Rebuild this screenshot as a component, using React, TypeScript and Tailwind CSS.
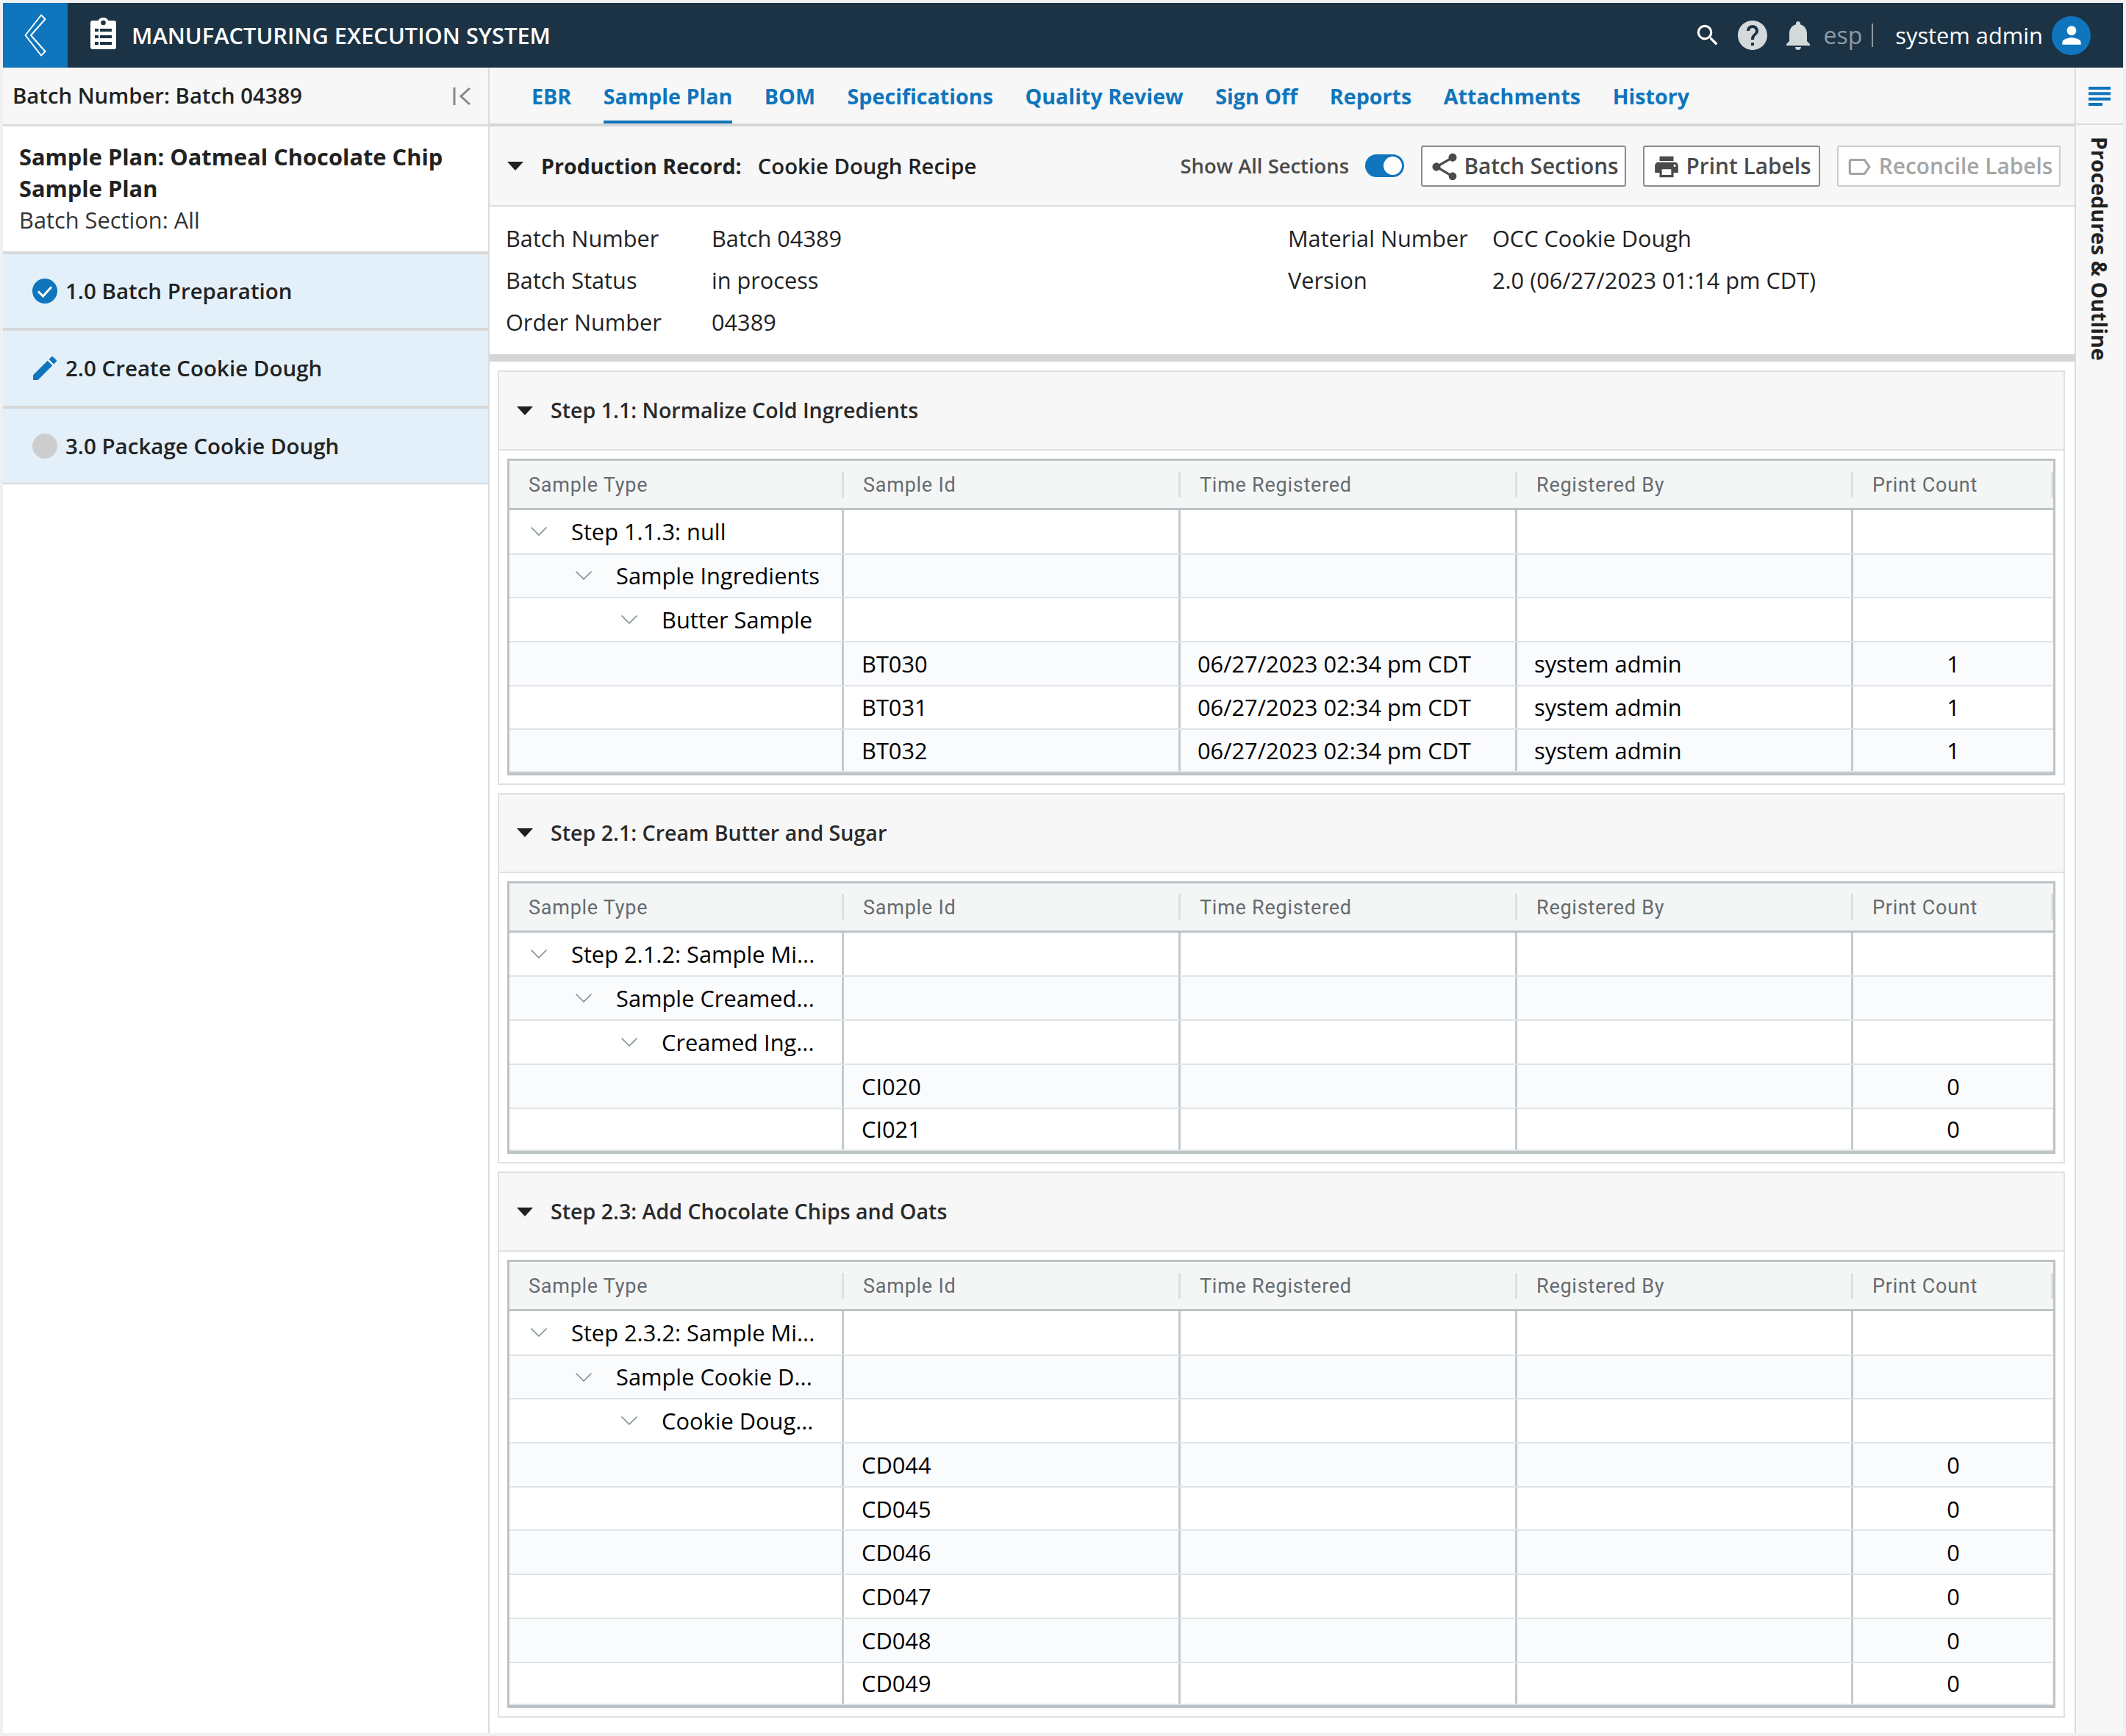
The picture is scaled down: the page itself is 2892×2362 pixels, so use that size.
import React from 'react';
import { ChevronDown } from 'lucide-react';
import { MdSearch, MdHelp, MdNotifications, MdEdit, MdShare, MdPrint, MdLabelOutline, MdPerson } from 'react-icons/md';

const tabs = ['EBR', 'Sample Plan', 'BOM', 'Specifications', 'Quality Review', 'Sign Off', 'Reports', 'Attachments', 'History'];
const columns = ['Sample Type', 'Sample Id', 'Time Registered', 'Registered By', 'Print Count'];

interface Sample {
  id: string;
  time?: string;
  by?: string;
  count: number;
}

interface Step {
  title: string;
  tree: string[];
  samples: Sample[];
}

const registered = { time: '06/27/2023 02:34 pm CDT', by: 'system admin' };

const steps: Step[] = [
  {
    title: 'Step 1.1: Normalize Cold Ingredients',
    tree: ['Step 1.1.3: null', 'Sample Ingredients', 'Butter Sample'],
    samples: [
      { id: 'BT030', count: 1, ...registered },
      { id: 'BT031', count: 1, ...registered },
      { id: 'BT032', count: 1, ...registered },
    ],
  },
  {
    title: 'Step 2.1: Cream Butter and Sugar',
    tree: ['Step 2.1.2: Sample Mi...', 'Sample Creamed...', 'Creamed Ing...'],
    samples: [
      { id: 'CI020', count: 0 },
      { id: 'CI021', count: 0 },
    ],
  },
  {
    title: 'Step 2.3: Add Chocolate Chips and Oats',
    tree: ['Step 2.3.2: Sample Mi...', 'Sample Cookie D...', 'Cookie Doug...'],
    samples: [
      { id: 'CD044', count: 0 },
      { id: 'CD045', count: 0 },
      { id: 'CD046', count: 0 },
      { id: 'CD047', count: 0 },
      { id: 'CD048', count: 0 },
      { id: 'CD049', count: 0 },
    ],
  },
];

const indents = ['pl-[20px]', 'pl-[81px]', 'pl-[143px]'];

const Caret = () => (
  <svg width="22" height="12" viewBox="0 0 22 12" className="shrink-0" fill="#1f1f1f">
    <path d="M0 0h22L11 12z" />
  </svg>
);

const Cell = ({ className = '', children }: { className?: string; children?: React.ReactNode }) => (
  <div className={`flex items-center border-r-[3px] border-[#c5cacd] ${className}`}>{children}</div>
);

const StepSection = ({ step }: { step: Step }) => {
  const rowBg = (i: number) => (i % 2 === 0 ? 'bg-white' : 'bg-[#fafbfd]');

  return (
    <section className="border-2 border-[#dfe0e1]">
      <div className="flex h-[107px] items-center gap-[24px] border-b-2 border-[#dfe0e1] bg-[#f7f7f7] pl-[24px] text-[28.6px] font-semibold text-[#2a2a2a]">
        <Caret />
        <span>{step.title}</span>
      </div>
      <div className="bg-white px-[11px] pt-[11px] pb-[11px]">
        <div className="border-x-[3px] border-t-[3px] border-b-[4px] border-[#bcc3c7]">
          <div className="grid h-[67px] grid-cols-[455px_458px_458px_457px_1fr] border-b-[3px] border-[#bcc3c7] bg-[#f4f6f6] font-['Roboto',sans-serif] text-[27px] tracking-[0.75px] text-[#666c6f]">
            {columns.map((c) => (
              <div key={c} className="flex items-center justify-between pl-[26px]">
                <span className="pt-[3px]">{c}</span>
                <span className="h-[35px] w-[3px] bg-[#dcdfe3]" />
              </div>
            ))}
          </div>
          {step.tree.map((label, i) => (
            <div key={label} className={`grid grid-cols-[455px_458px_458px_457px_1fr] border-b-2 border-[#dfe3e6] ${i === 0 ? 'h-[60.5px]' : 'h-[59.7px]'} ${rowBg(i)}`}>
              <Cell className={indents[i]}>
                <ChevronDown className="h-[40px] w-[40px] shrink-0 text-[#7f8c90]" strokeWidth={1} />
                <span className="ml-[24px] text-[30.8px] text-black">{label}</span>
              </Cell>
              <Cell />
              <Cell />
              <Cell />
              <div />
            </div>
          ))}
          {step.samples.map((s, i) => (
            <div key={s.id} className={`grid grid-cols-[455px_458px_458px_457px_1fr] border-b-2 border-[#dfe3e6] text-[30.8px] text-black ${i === step.samples.length - 1 ? 'h-[57.7px]' : 'h-[59.7px]'} ${rowBg(i + 3)}`}>
              <Cell />
              <Cell className="pl-[24px]">{s.id}</Cell>
              <Cell className="pl-[23px]">{s.time}</Cell>
              <Cell className="pl-[23px]">{s.by}</Cell>
              <div className="flex items-center justify-center">{s.count}</div>
            </div>
          ))}
        </div>
      </div>
    </section>
  );
};

const App: React.FC = () => {
  return (
    <div className="flex h-[2362px] w-[2892px] flex-col bg-[#eef0f1] p-1 font-['Open_Sans','Liberation_Sans',sans-serif] text-[#222]">
      <header className="flex h-[88px] shrink-0 items-center bg-[#1b3344] text-white">
        <div className="flex h-full w-[88px] items-center justify-center bg-[#0f75bc]">
          <svg width="30" height="58" viewBox="0 0 30 58" fill="none" stroke="white" strokeWidth="2">
            <path d="M23 1.5 L28.5 7 L9 29 L28.5 51 L23 56.5 L1.5 29 Z" strokeLinejoin="round" />
          </svg>
        </div>
        <svg className="mb-[5px] ml-[31px]" width="35" height="43" viewBox="0 0 35 43">
          <path fill="white" fillRule="evenodd" d="M17.5 0a7 7 0 0 1 6.8 4H32a3 3 0 0 1 3 3v33a3 3 0 0 1-3 3H3a3 3 0 0 1-3-3V7a3 3 0 0 1 3-3h7.7A7 7 0 0 1 17.5 0zm0 3.7a3.3 3.3 0 1 0 0 6.6 3.3 3.3 0 0 0 0-6.6z" />
          <g fill="#1b3344">
            <rect x="6" y="15" width="5" height="4" />
            <rect x="13" y="15" width="16" height="4" />
            <rect x="6" y="24" width="5" height="4" />
            <rect x="13" y="24" width="16" height="4" />
            <rect x="6" y="33" width="5" height="4" />
            <rect x="13" y="33" width="16" height="4" />
          </g>
        </svg>
        <span className="ml-[21px] text-[30.8px] font-semibold">MANUFACTURING EXECUTION SYSTEM</span>
        <div className="ml-auto flex items-center pr-[44px]">
          <MdSearch className="h-[38px] w-[38px] text-white" />
          <MdHelp className="ml-[18px] h-[48px] w-[48px] text-[#d4d9dc]" />
          <MdNotifications className="ml-[14px] h-[48px] w-[48px] text-[#d4d9dc]" />
          <span className="ml-[11px] text-[32px] text-[#8d9aa3]">esp</span>
          <span className="ml-[13px] h-[32px] w-[2px] bg-[#8d9aa3]" />
          <span className="ml-[30px] text-[30.8px] text-white">system admin</span>
          <span className="ml-[12px] flex h-[53px] w-[53px] items-center justify-center rounded-full bg-[#0f75bc]">
            <MdPerson className="h-[38px] w-[38px] text-white" />
          </span>
        </div>
      </header>

      <div className="flex min-h-0 flex-1">
        <aside className="flex w-[662px] shrink-0 flex-col border-r-2 border-[#dcdcdc] bg-white">
          <div className="flex h-[80px] items-center justify-between border-b-[3px] border-[#dcdcdc] bg-[#f7f7f7] pl-[13px] pr-[22px] text-[29.3px] font-[550]">
            <span className="pt-[1px]">Batch Number: Batch 04389</span>
            <svg width="26" height="26" viewBox="0 0 26 26" fill="none" stroke="#888" strokeWidth="3">
              <path d="M2 1v24M23 2 L11 13 L23 24" />
            </svg>
          </div>
          <div className="h-[170px] px-[22px] pt-[20px] text-[30.8px] leading-[43px]">
            <div className="font-bold text-[#222]">Sample Plan: Oatmeal Chocolate Chip<br />Sample Plan</div>
            <div className="text-[#333]">Batch Section: All</div>
          </div>
          <div className="flex h-[108px] items-center gap-[11px] border-y-[4px] border-[#d8d8d8] bg-[#e3f0f9] pl-[40px] text-[29.5px] font-[550]">
            <svg width="34" height="34" viewBox="0 0 34 34">
              <circle cx="17" cy="17" r="17" fill="#0f75bc" />
              <path d="M8 17.5l6.5 6.5L26 11.5" fill="none" stroke="white" strokeWidth="3" />
            </svg>
            <span>1.0 Batch Preparation</span>
          </div>
          <div className="flex h-[106px] items-center gap-[11px] border-b-[4px] border-[#d8d8d8] bg-[#e3f0f9] pl-[40px] text-[29.5px] font-[550]">
            <MdEdit className="h-[34px] w-[34px] scale-125 text-[#0f75bc]" />
            <span>2.0 Create Cookie Dough</span>
          </div>
          <div className="flex h-[103px] items-center gap-[11px] border-b-2 border-[#d8d8d8] bg-[#e3f0f9] pl-[40px] text-[29.5px] font-[550]">
            <span className="h-[34px] w-[34px] rounded-full bg-[#cdcdcd]" />
            <span className="pt-[1px]">3.0 Package Cookie Dough</span>
          </div>
        </aside>

        <main className="flex min-w-0 flex-1 flex-col bg-white">
          <nav className="flex h-[80px] shrink-0 items-stretch gap-[43.5px] border-b-[4px] border-[#d6d5d6] bg-[#f7f7f7] pl-[57px] text-[28.7px] font-bold text-[#0f75bc]">
            {tabs.map((t) => (
              <a key={t} className={`flex items-center pt-[5px] ${t === 'Sample Plan' ? 'border-b-[4px] border-[#0f75bc]' : 'pb-[4px]'}`}>{t}</a>
            ))}
          </nav>

          <div className="flex h-[109px] shrink-0 items-center border-b-2 border-[#dcdcdc] bg-[#f7f7f7] pl-[24px] pr-[19px]">
            <Caret />
            <span className="ml-[24px] pt-[2px] text-[28.6px] font-bold">Production Record:</span>
            <span className="ml-[22px] pt-[2px] text-[29.3px] font-[550]">Cookie Dough Recipe</span>
            <span className="ml-auto text-[27.4px] font-[550] text-[#4a4a4a]">Show All Sections</span>
            <span className="ml-[22px] flex h-[31px] w-[53px] items-center justify-end rounded-full bg-[#0f75bc] pr-[3px]">
              <span className="h-[25px] w-[25px] rounded-full bg-white" />
            </span>
            <button className="ml-[23px] flex h-[56px] w-[279px] items-center justify-center gap-[4px] rounded-[3px] border-2 border-[#8c8c8c] bg-white pt-[2px] text-[29.8px] font-[550] text-[#4a4a4a]">
              <MdShare className="h-[44px] w-[44px]" />
              Batch Sections
            </button>
            <button className="ml-[23px] flex h-[56px] w-[241px] items-center justify-center gap-[8px] rounded-[3px] border-2 border-[#8c8c8c] bg-white pt-[2px] text-[29.8px] font-[550] text-[#4a4a4a]">
              <MdPrint className="h-[38px] w-[38px]" />
              Print Labels
            </button>
            <button className="ml-[23px] flex h-[56px] w-[304px] items-center justify-center gap-[8px] rounded-[3px] border-2 border-[#cccccc] bg-white pt-[2px] text-[29.8px] font-[550] text-[#a5a5a5]">
              <MdLabelOutline className="h-[38px] w-[38px]" />
              Reconcile Labels
            </button>
          </div>

          <div className="grid h-[211px] shrink-0 grid-cols-[280px_784px_278px_1fr] content-start border-b-[10px] border-[#d6d5d6] pl-[22px] pt-[15px] text-[30.7px] leading-[57px] text-[#222]">
            <span>Batch Number</span>
            <span>Batch 04389</span>
            <span>Material Number</span>
            <span>OCC Cookie Dough</span>
            <span>Batch Status</span>
            <span>in process</span>
            <span>Version</span>
            <span>2.0 (06/27/2023 01:14 pm CDT)</span>
            <span>Order Number</span>
            <span>04389</span>
          </div>

          <div className="flex flex-col gap-[11px] pl-[11px] pr-[13px] pt-[12px]">
            {steps.map((s) => (
              <StepSection key={s.title} step={s} />
            ))}
          </div>
        </main>

        <aside className="flex w-[66px] shrink-0 flex-col border-l-2 border-[#dcdcdc] bg-[#f7f7f7]">
          <div className="flex h-[78px] shrink-0 items-center justify-center border-b-2 border-[#dcdcdc] pt-[2px]">
            <svg width="30" height="26" viewBox="0 0 30 26" fill="#0f75bc">
              <rect width="30" height="4" y="0" />
              <rect width="30" height="4" y="7.3" />
              <rect width="30" height="4" y="14.7" />
              <rect width="19" height="4" y="22" />
            </svg>
          </div>
          <div className="self-center pt-[16px] text-[28.6px] font-bold text-[#222] [writing-mode:vertical-rl]">Procedures &amp; Outline</div>
        </aside>
      </div>
    </div>
  );
};

export default App;
